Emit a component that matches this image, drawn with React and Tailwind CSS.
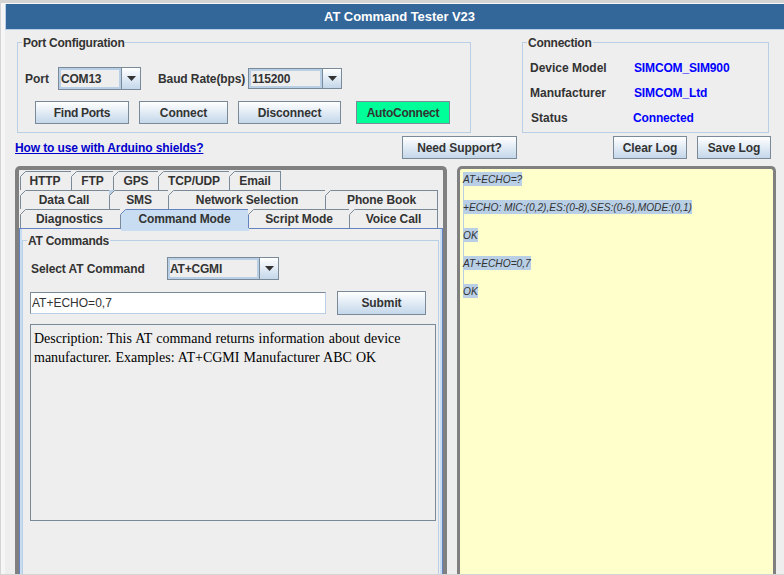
const btnClass = 'h-[23px] shrink-0 border border-[#7a8a99] text-[12px] font-bold text-[#333333] bg-gradient-to-b from-white to-[#c4d7ea] flex items-center justify-center tracking-[-0.1px]';

function Button({ w, children }) {
  return <button type="button" className={`${btnClass} ${w}`}>{children}</button>;
}

function Combo({ w, h = 'h-[23px]', pad = 'pl-0', children }) {
  return (
    <div className={`${w} ${h} flex shrink-0 border border-[#7a8a99] bg-[#eeeeee]`}>
      <div className={`flex-1 flex items-center ${pad} border-2 border-[#b8cfe5] text-[12px] font-bold text-[#333333] tracking-[-0.2px]`}>{children}</div>
      <div className="w-[19px] border-l border-[#7a8a99] bg-gradient-to-b from-white to-[#c4d7ea] flex items-center justify-center">
        <svg width="9" height="5" viewBox="0 0 9 5"><path d="M0 0h9L4.5 5z" fill="#333333" /></svg>
      </div>
    </div>
  );
}

function Group({ title, className, children }) {
  return (
    <div className={`relative border border-[#b8cfe5] ${className}`}>
      <span className="absolute left-[4px] top-[-7px] bg-[#eeeeee] px-[1px] text-[12px] leading-[14px] font-bold text-[#333333] tracking-[-0.25px]">{title}</span>
      {children}
    </div>
  );
}

function Tab({ w, selected, corner = '#eeeeee', first, children }) {
  return (
    <div
      className={`relative ${w} h-full shrink-0 flex items-center justify-center text-[12px] font-bold text-[#333333] tracking-[-0.1px] border-t border-r ${first ? 'border-l pr-[2px]' : ''} ${selected ? 'bg-[#c8ddf2] border-[#6382bf]' : 'border-[#7a8a99]'}`}
    >
      <svg className="absolute left-[-1px] top-[-1px]" width="6" height="6" viewBox="0 0 6 6">
        <path d="M0 0h6L0 6z" fill={corner} />
        <path d="M0.5 5.5L5.5 0.5" stroke={selected ? '#6382bf' : '#7a8a99'} strokeWidth="1" fill="none" />
      </svg>
      {selected && <div className="absolute left-0 right-[-1px] top-full h-[3px] z-10 bg-[#c8ddf2]" />}
      {children}
    </div>
  );
}

function InfoRow({ label, value, labelClass = '', valueClass }) {
  return (
    <div className="relative h-[25px] flex items-center text-[12px] font-bold">
      <span className={`text-[#333333] ${labelClass}`}>{label}</span>
      <span className={`absolute text-[#0000ff] tracking-[-0.15px] ${valueClass}`}>{value}</span>
    </div>
  );
}

const logLines = ['AT+ECHO=?', '+ECHO: MIC:(0,2),ES:(0-8),SES:(0-6),MODE:(0,1)', 'OK', 'AT+ECHO=0,7', 'OK'];

export default function App() {
  return (
    <div className="w-[784px] h-[575px] overflow-hidden flex bg-[#f6f6f6] border-t-[3px] border-b border-l border-t-[#d4d4d4] border-b-[#d4d4d4] border-l-[#d4d4d4] pt-[1px] pl-[4px] font-['Liberation_Sans',Arial,sans-serif]">
      <div className="flex-1 min-w-0 flex flex-col bg-[#eeeeee]">
        {/* title bar */}
        <div className="h-[26px] shrink-0 bg-[#336699] border-l border-b border-[#b8cfe5] flex items-center justify-center pl-[9px] text-white text-[13px] font-bold tracking-[-0.05px]">
          AT Command Tester V23
        </div>

        {/* top groups */}
        <div className="flex mt-[12px] ml-[12px] shrink-0">
          <Group title="Port Configuration" className="w-[454px] h-[91px] pt-[24px]">
            <div className="flex items-center h-[23px]">
              <span className="ml-[7px] w-[33px] text-[12px] font-bold text-[#333333]">Port</span>
              <Combo w="w-[83px]">COM13</Combo>
              <span className="ml-[17px] w-[90px] text-[12px] font-bold text-[#333333] tracking-[-0.1px]">Baud Rate(bps)</span>
              <Combo w="w-[94px]" h="h-[21px]" pad="pl-[1px]">115200</Combo>
            </div>
            <div className="flex items-center mt-[11px] ml-[17px]">
              <Button w="w-[94px] tracking-[-0.3px]">Find Ports</Button>
              <Button w="w-[89px] ml-[10px]">Connect</Button>
              <Button w="w-[103px] ml-[10px]">Disconnect</Button>
              <button type="button" className="ml-[15px] w-[94px] h-[23px] border border-[#7a8a99] bg-[#00ff99] text-[12px] font-bold text-[#333333] tracking-[-0.25px]">AutoConnect</button>
            </div>
          </Group>
          <Group title="Connection" className="w-[247px] h-[91px] ml-[51px] pt-[12px] pl-[7px]">
            <InfoRow label="Device Model" value="SIMCOM_SIM900" valueClass="left-[104px]" />
            <InfoRow label="Manufacturer" value="SIMCOM_Ltd" valueClass="left-[104px]" />
            <InfoRow label="Status" labelClass="ml-[1px]" value="Connected" valueClass="left-[103px]" />
          </Group>
        </div>

        {/* link and actions */}
        <div className="flex items-center h-[23px] mt-[3px] ml-[10px] shrink-0">
          <a href="#" className="w-[188px] shrink-0 whitespace-nowrap text-[12px] font-bold text-[#0000cc] underline tracking-[-0.12px]">How to use with Arduino shields?</a>
          <Button w="w-[115px] ml-[199px]">Need Support?</Button>
          <Button w="w-[74px] ml-[96px]">Clear Log</Button>
          <Button w="w-[74px] ml-[10px]">Save Log</Button>
        </div>

        {/* panels */}
        <div className="flex flex-1 min-h-0 mt-[7px] ml-[10px]">
          <div className="w-[432px] flex flex-col border-x-4 border-t-4 border-[#808080] rounded-t-[5px] pt-[1px]">
            <div className="flex h-[19px] ml-[1px] shrink-0">
              <Tab first w="w-[52px]">HTTP</Tab>
              <Tab w="w-[42px]">FTP</Tab>
              <Tab w="w-[45px]">GPS</Tab>
              <Tab w="w-[71px]">TCP/UDP</Tab>
              <Tab w="w-[51px]">Email</Tab>
            </div>
            <div className="flex h-[19px] ml-[1px] shrink-0">
              <Tab first w="w-[90px]">Data Call</Tab>
              <Tab w="w-[59px]" corner="#b8cfe5">SMS</Tab>
              <Tab w="w-[157px]">Network Selection</Tab>
              <Tab w="w-[112px]">Phone Book</Tab>
            </div>
            <div className="flex h-[19px] ml-[1px] shrink-0">
              <Tab first w="w-[101px]">Diagnostics</Tab>
              <Tab selected w="w-[128px]">Command Mode</Tab>
              <Tab w="w-[101px]">Script Mode</Tab>
              <Tab w="w-[88px]">Voice Call</Tab>
            </div>
            <div className="flex-1 min-h-0 border-t border-x border-[#6382bf] bg-[#c8ddf2] px-[2px]">
              <div className="h-full bg-[#eeeeee] pt-[11px]">
                <Group title="AT Commands" className="h-full border-b-0 ml-0 mr-[1px]">
                  <div className="flex items-center h-[23px] mt-[16px] ml-[8px]">
                    <span className="w-[136px] text-[12px] font-bold text-[#333333] tracking-[-0.1px]">Select AT Command</span>
                    <Combo w="w-[112px]">AT+CGMI</Combo>
                  </div>
                  <div className="flex items-center mt-[11px] ml-[7px]">
                    <input
                      readOnly
                      value="AT+ECHO=0,7"
                      className="w-[296px] h-[22px] bg-white border border-[#7a8a99] border-r-[#b8cfe5] border-b-[#b8cfe5] pl-[1px] text-[12px] text-[#333333] outline-none"
                    />
                    <Button w="w-[89px] h-[24px] ml-[11px]">Submit</Button>
                  </div>
                  <div className="w-[406px] h-[197px] mt-[9px] ml-[7px] border border-[#7a8a99] pl-[3px] pt-[4px] pr-[10px] text-[14px] leading-[19px] [word-spacing:0.6px] text-black font-['Liberation_Serif','Times_New_Roman',serif]">
                    Description: This AT command returns information about device manufacturer. Examples: AT+CGMI Manufacturer ABC OK
                  </div>
                </Group>
              </div>
            </div>
          </div>

          <div className="w-[319px] ml-[10px] border-x-[3px] border-t-[3px] border-[#808080] rounded-t-[5px] bg-[#ffffcc] pt-[3px] pl-[3px]">
            {logLines.map((line, i) => (
              <div key={i}>
                <div className="w-fit h-[14px] bg-[#b8cfe5] text-[10.2px] leading-[16px] italic text-[#333333]">{line}</div>
                {i < logLines.length - 1 && <div className="w-[1px] h-[14px] bg-[#b8cfe5]" />}
              </div>
            ))}
          </div>
        </div>
      </div>
    </div>
  );
}
